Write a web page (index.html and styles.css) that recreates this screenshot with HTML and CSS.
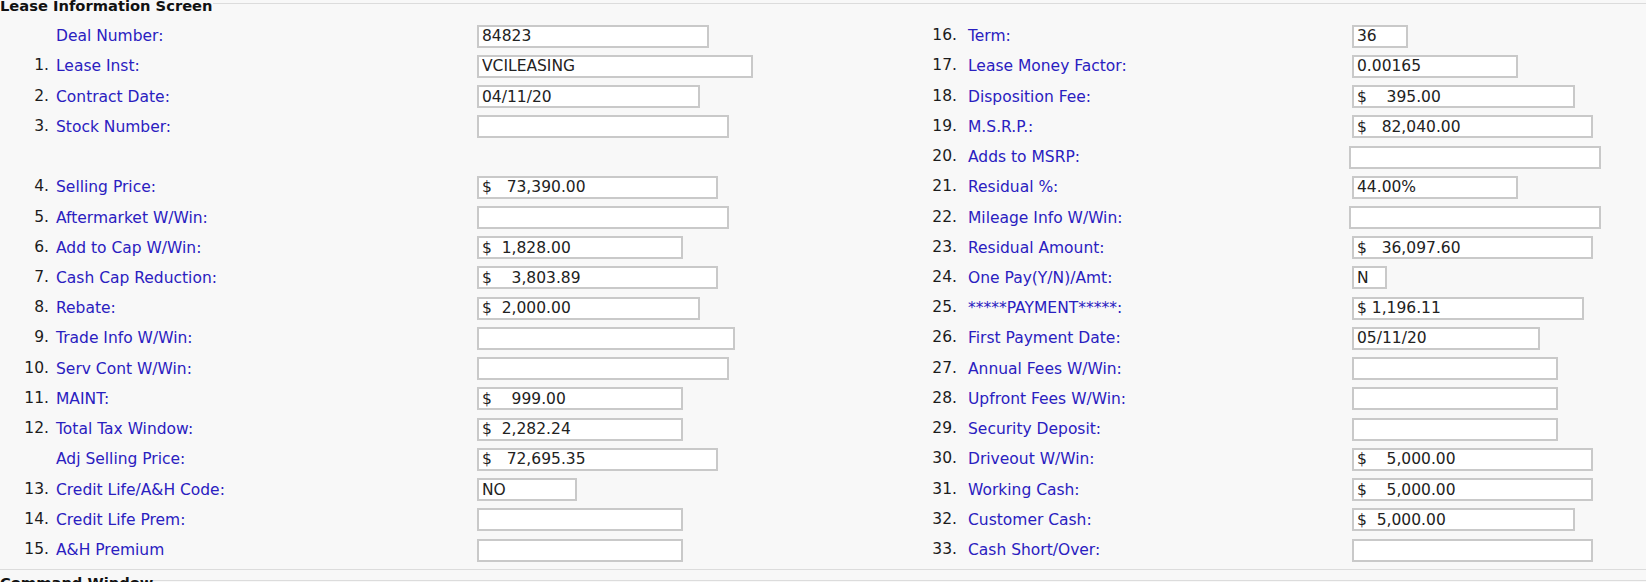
FILE: index.html
```html
<!DOCTYPE html>
<html lang="en">
<head>
  <meta charset="UTF-8" />
  <title>Lease Information Screen</title>
  <link rel="stylesheet" href="styles.css">
</head>
<body>
  <fieldset class="panel">
    <legend>Lease Information Screen</legend>
    <div class="lease-grid">
      <span class="num"></span><span class="lbl">Deal Number:</span><span class="fld"><input class="w232" value="84823"></span>
      <span class="num">16.</span><span class="lbl">Term:</span><span class="fld"><input class="w56" value="36"></span>

      <span class="num">1.</span><span class="lbl">Lease Inst:</span><span class="fld"><input class="w276" value="VCILEASING"></span>
      <span class="num">17.</span><span class="lbl">Lease Money Factor:</span><span class="fld"><input class="w166" value="0.00165"></span>

      <span class="num">2.</span><span class="lbl">Contract Date:</span><span class="fld"><input class="w223" value="04/11/20"></span>
      <span class="num">18.</span><span class="lbl">Disposition Fee:</span><span class="fld"><input class="w223" value="$    395.00"></span>

      <span class="num">3.</span><span class="lbl">Stock Number:</span><span class="fld"><input class="w252" value=""></span>
      <span class="num">19.</span><span class="lbl">M.S.R.P.:</span><span class="fld"><input class="w241" value="$   82,040.00"></span>

      <span class="num"></span><span class="lbl"></span><span class="fld"></span>
      <span class="num">20.</span><span class="lbl">Adds to MSRP:</span><span class="fld"><input class="w252 shift" value=""></span>

      <span class="num">4.</span><span class="lbl">Selling Price:</span><span class="fld"><input class="w241" value="$   73,390.00"></span>
      <span class="num">21.</span><span class="lbl">Residual %:</span><span class="fld"><input class="w166" value="44.00%"></span>

      <span class="num">5.</span><span class="lbl">Aftermarket W/Win:</span><span class="fld"><input class="w252" value=""></span>
      <span class="num">22.</span><span class="lbl">Mileage Info W/Win:</span><span class="fld"><input class="w252 shift" value=""></span>

      <span class="num">6.</span><span class="lbl">Add to Cap W/Win:</span><span class="fld"><input class="w206" value="$  1,828.00"></span>
      <span class="num">23.</span><span class="lbl">Residual Amount:</span><span class="fld"><input class="w241" value="$   36,097.60"></span>

      <span class="num">7.</span><span class="lbl">Cash Cap Reduction:</span><span class="fld"><input class="w241" value="$    3,803.89"></span>
      <span class="num">24.</span><span class="lbl">One Pay(Y/N)/Amt:</span><span class="fld"><input class="w35" value="N"></span>

      <span class="num">8.</span><span class="lbl">Rebate:</span><span class="fld"><input class="w223" value="$  2,000.00"></span>
      <span class="num">25.</span><span class="lbl">*****PAYMENT*****:</span><span class="fld"><input class="w232" value="$ 1,196.11"></span>

      <span class="num">9.</span><span class="lbl">Trade Info W/Win:</span><span class="fld"><input class="w258" value=""></span>
      <span class="num">26.</span><span class="lbl">First Payment Date:</span><span class="fld"><input class="w188" value="05/11/20"></span>

      <span class="num">10.</span><span class="lbl">Serv Cont W/Win:</span><span class="fld"><input class="w252" value=""></span>
      <span class="num">27.</span><span class="lbl">Annual Fees W/Win:</span><span class="fld"><input class="w206" value=""></span>

      <span class="num">11.</span><span class="lbl">MAINT:</span><span class="fld"><input class="w206" value="$    999.00"></span>
      <span class="num">28.</span><span class="lbl">Upfront Fees W/Win:</span><span class="fld"><input class="w206" value=""></span>

      <span class="num">12.</span><span class="lbl">Total Tax Window:</span><span class="fld"><input class="w206" value="$  2,282.24"></span>
      <span class="num">29.</span><span class="lbl">Security Deposit:</span><span class="fld"><input class="w206" value=""></span>

      <span class="num"></span><span class="lbl">Adj Selling Price:</span><span class="fld"><input class="w241" value="$   72,695.35"></span>
      <span class="num">30.</span><span class="lbl">Driveout W/Win:</span><span class="fld"><input class="w241" value="$    5,000.00"></span>

      <span class="num">13.</span><span class="lbl">Credit Life/A&amp;H Code:</span><span class="fld"><input class="w100" value="NO"></span>
      <span class="num">31.</span><span class="lbl">Working Cash:</span><span class="fld"><input class="w241" value="$    5,000.00"></span>

      <span class="num">14.</span><span class="lbl">Credit Life Prem:</span><span class="fld"><input class="w206" value=""></span>
      <span class="num">32.</span><span class="lbl">Customer Cash:</span><span class="fld"><input class="w223" value="$  5,000.00"></span>

      <span class="num">15.</span><span class="lbl">A&amp;H Premium</span><span class="fld"><input class="w206" value=""></span>
      <span class="num">33.</span><span class="lbl">Cash Short/Over:</span><span class="fld"><input class="w241" value=""></span>
    </div>
  </fieldset>

  <fieldset class="panel command">
    <legend>Command Window</legend>
    <div class="command-body"></div>
  </fieldset>
</body>
</html>
```

FILE: styles.css
```css
* {
  box-sizing: border-box;
}
body {
  margin: 0;
  background-color: #f8f8f8;
  font-family: 'DejaVu Sans', Verdana, sans-serif;
  font-size: 15.5px;
  color: #222;
  overflow: hidden;
}
.panel {
  margin: -7px 0 0;
  padding: 7px 0 4px;
  border: 1px solid #dcdcdc;
  border-left: none;
  border-right: none;
  min-width: 0;
}
.panel legend {
  padding: 4px 0 0;
  font-weight: bold;
  font-size: 14.7px;
  color: #111;
}
.command {
  margin-top: 0;
}
.command-body {
  height: 60px;
}

.lease-grid {
  display: grid;
  grid-template-columns: 52px 425px 428px 56px 391px 1fr;
  grid-auto-rows: 30.24px;
  align-items: center;
}
.num {
  text-align: right;
  padding: 0 3px 2px 0;
  color: #1c1c1c;
  white-space: nowrap;
}
.lbl {
  padding-left: 4px;
  color: #2a20c0;
  white-space: nowrap;
}
.lease-grid .num:nth-child(6n+4) {
  padding-right: 4px;
}
.lease-grid .lbl:nth-child(6n+5) {
  padding-left: 7px;
}
.fld {
  display: flex;
  align-items: center;
}
.fld input {
  height: 23px;
  padding: 0 3px;
  border: 2px solid #c9c9c9;
  background-color: #fff;
  font: inherit;
  color: #222;
  white-space: pre;
}
.fld input.shift {
  margin-left: -3px;
}
.w35 { width: 35px; }
.w56 { width: 56px; }
.w100 { width: 100px; }
.w166 { width: 166px; }
.w188 { width: 188px; }
.w206 { width: 206px; }
.w223 { width: 223px; }
.w232 { width: 232px; }
.w241 { width: 241px; }
.w252 { width: 252px; }
.w258 { width: 258px; }
.w276 { width: 276px; }
```
